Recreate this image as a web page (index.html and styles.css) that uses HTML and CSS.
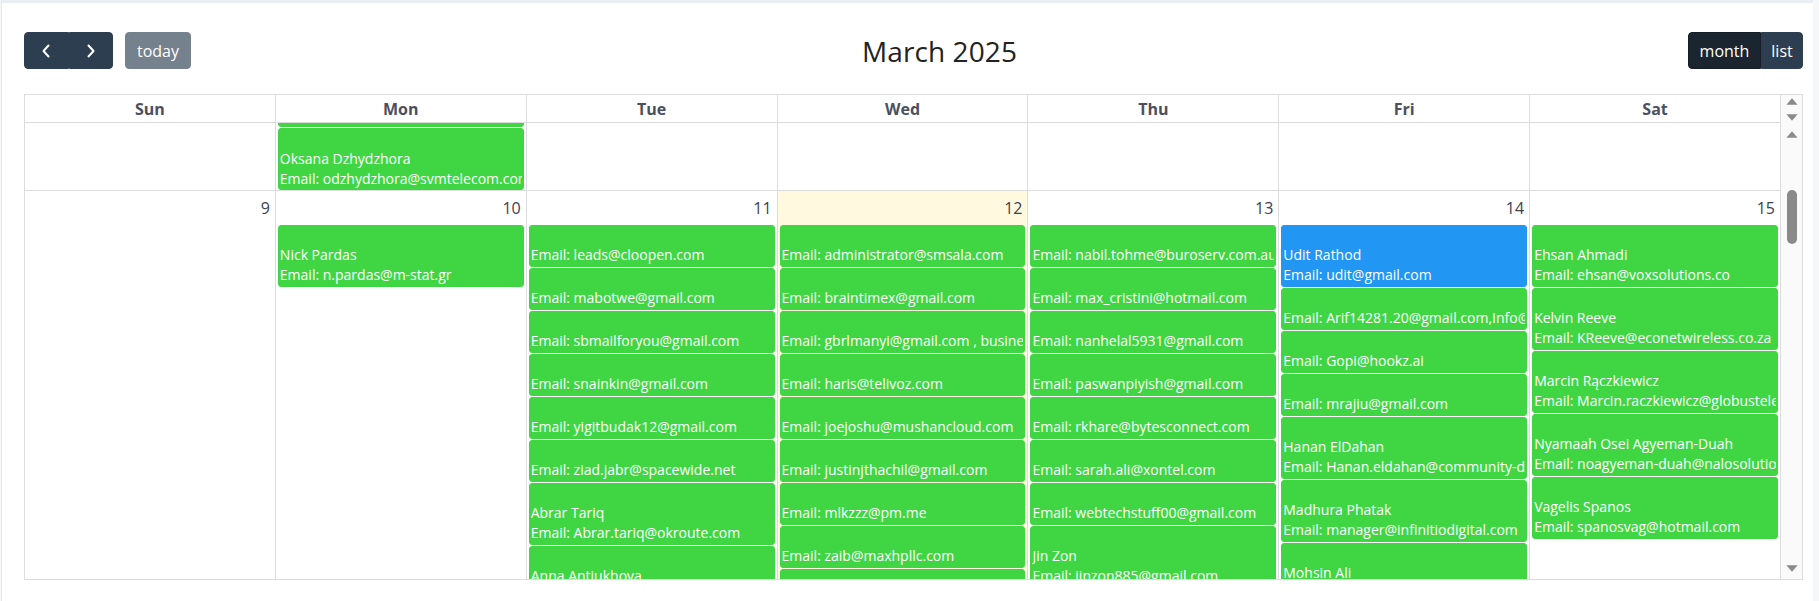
FILE: index.html
```html
<!DOCTYPE html>
<html lang="en">
<head>
<meta charset="utf-8">
<title>Calendar – March 2025</title>
<link rel="stylesheet" href="styles.css">
</head>
<body>
<div class="card">
  <div class="toolbar">
    <div class="chunk">
      <div class="btn-group">
        <button class="btn btn-icon" type="button" aria-label="prev"><svg width="10" height="14" viewBox="0 0 10 14"><polyline points="7.5,1.5 2.5,7 7.5,12.5" fill="none" stroke="#fff" stroke-width="2" stroke-linecap="round" stroke-linejoin="round"/></svg></button>
        <button class="btn btn-icon" type="button" aria-label="next"><svg width="10" height="14" viewBox="0 0 10 14"><polyline points="2.5,1.5 7.5,7 2.5,12.5" fill="none" stroke="#fff" stroke-width="2" stroke-linecap="round" stroke-linejoin="round"/></svg></button>
      </div>
      <button class="btn btn-today" type="button" disabled>today</button>
    </div>
    <h2 class="title">March 2025</h2>
    <div class="chunk">
      <div class="btn-group">
        <button class="btn btn-active" type="button">month</button>
        <button class="btn" type="button">list</button>
      </div>
    </div>
  </div>

  <div class="grid">
    <div class="head-row">
      <div class="cols">
        <div class="hcell">Sun</div>
        <div class="hcell">Mon</div>
        <div class="hcell">Tue</div>
        <div class="hcell">Wed</div>
        <div class="hcell">Thu</div>
        <div class="hcell">Fri</div>
        <div class="hcell">Sat</div>
      </div>
      <div class="sb sb-head">
        <svg class="arrow" width="12" height="7" viewBox="0 0 12 7"><polygon points="6,0.3 11.6,6.7 0.4,6.7" fill="#8a8a8a"/></svg>
        <svg class="arrow arrow-down" width="12" height="7" viewBox="0 0 12 7"><polygon points="0.4,0.3 11.6,0.3 6,6.7" fill="#8a8a8a"/></svg>
      </div>
    </div>

    <div class="body-row">
      <div class="viewport">
        <div class="cols week week-partial">
          <div class="day"></div>
          <div class="day">
            <div class="ev ev-cut"><div class="ln">Ivan Petrenko</div><div class="ln">Email: ivan.petrenko@ukrtelecom.ua</div></div>
            <div class="ev"><div class="ln">Oksana Dzhydzhora</div><div class="ln">Email: odzhydzhora@svmtelecom.com</div></div>
          </div>
          <div class="day"></div>
          <div class="day"></div>
          <div class="day"></div>
          <div class="day"></div>
          <div class="day"></div>
        </div>

        <div class="cols week">
          <div class="day">
            <div class="day-top"><span class="num">9</span></div>
          </div>
          <div class="day">
            <div class="day-top"><span class="num">10</span></div>
            <div class="ev"><div class="ln">Nick Pardas</div><div class="ln">Email: n.pardas@m-stat.gr</div></div>
          </div>
          <div class="day">
            <div class="day-top"><span class="num">11</span></div>
            <div class="ev"><div class="ln">Email: leads@cloopen.com</div></div>
            <div class="ev"><div class="ln">Email: mabotwe@gmail.com</div></div>
            <div class="ev"><div class="ln">Email: sbmailforyou@gmail.com</div></div>
            <div class="ev"><div class="ln">Email: snainkin@gmail.com</div></div>
            <div class="ev"><div class="ln">Email: yigitbudak12@gmail.com</div></div>
            <div class="ev"><div class="ln">Email: ziad.jabr@spacewide.net</div></div>
            <div class="ev"><div class="ln">Abrar Tariq</div><div class="ln">Email: Abrar.tariq@okroute.com</div></div>
            <div class="ev"><div class="ln">Anna Antiukhova</div><div class="ln">Email: anna.antiukhova@gmail.com</div></div>
          </div>
          <div class="day today">
            <div class="day-top"><span class="num">12</span></div>
            <div class="ev"><div class="ln">Email: administrator@smsala.com</div></div>
            <div class="ev"><div class="ln">Email: braintimex@gmail.com</div></div>
            <div class="ev"><div class="ln">Email: gbrlmanyi@gmail.com , business@gbrlmanyi.com</div></div>
            <div class="ev"><div class="ln">Email: haris@telivoz.com</div></div>
            <div class="ev"><div class="ln">Email: joejoshu@mushancloud.com</div></div>
            <div class="ev"><div class="ln">Email: justinjthachil@gmail.com</div></div>
            <div class="ev"><div class="ln">Email: mlkzzz@pm.me</div></div>
            <div class="ev"><div class="ln">Email: zaib@maxhpllc.com</div></div>
            <div class="ev"><div class="ln">Email: info@telcoroute.net</div></div>
          </div>
          <div class="day">
            <div class="day-top"><span class="num">13</span></div>
            <div class="ev"><div class="ln">Email: nabil.tohme@buroserv.com.au</div></div>
            <div class="ev"><div class="ln">Email: max_cristini@hotmail.com</div></div>
            <div class="ev"><div class="ln">Email: nanhelal5931@gmail.com</div></div>
            <div class="ev"><div class="ln">Email: paswanpiyish@gmail.com</div></div>
            <div class="ev"><div class="ln">Email: rkhare@bytesconnect.com</div></div>
            <div class="ev"><div class="ln">Email: sarah.ali@xontel.com</div></div>
            <div class="ev"><div class="ln">Email: webtechstuff00@gmail.com</div></div>
            <div class="ev"><div class="ln">Jin Zon</div><div class="ln">Email: jinzon885@gmail.com</div></div>
          </div>
          <div class="day">
            <div class="day-top"><span class="num">14</span></div>
            <div class="ev ev-blue"><div class="ln">Udit Rathod</div><div class="ln">Email: udit@gmail.com</div></div>
            <div class="ev"><div class="ln">Email: Arif14281.20@gmail.com,Info@vtelecom.com</div></div>
            <div class="ev"><div class="ln">Email: Gopi@hookz.ai</div></div>
            <div class="ev"><div class="ln">Email: mrajiu@gmail.com</div></div>
            <div class="ev"><div class="ln">Hanan ElDahan</div><div class="ln">Email: Hanan.eldahan@community-dev.com</div></div>
            <div class="ev"><div class="ln">Madhura Phatak</div><div class="ln">Email: manager@infinitiodigital.com</div></div>
            <div class="ev"><div class="ln">Mohsin Ali</div><div class="ln">Email: mohsin.ali@gmail.com</div></div>
          </div>
          <div class="day">
            <div class="day-top"><span class="num">15</span></div>
            <div class="ev"><div class="ln">Ehsan Ahmadi</div><div class="ln">Email: ehsan@voxsolutions.co</div></div>
            <div class="ev"><div class="ln">Kelvin Reeve</div><div class="ln">Email: KReeve@econetwireless.co.za</div></div>
            <div class="ev"><div class="ln">Marcin Rączkiewicz</div><div class="ln">Email: Marcin.raczkiewicz@globustelecom.com</div></div>
            <div class="ev"><div class="ln">Nyamaah Osei Agyeman-Duah</div><div class="ln">Email: noagyeman-duah@nalosolutions.com</div></div>
            <div class="ev"><div class="ln">Vagelis Spanos</div><div class="ln">Email: spanosvag@hotmail.com</div></div>
          </div>
        </div>
      </div>
      <div class="sb sb-body">
        <svg class="arrow" width="12" height="7" viewBox="0 0 12 7"><polygon points="6,0.3 11.6,6.7 0.4,6.7" fill="#8a8a8a"/></svg>
        <div class="track"><div class="thumb"></div></div>
        <svg class="arrow" width="12" height="7" viewBox="0 0 12 7"><polygon points="0.4,0.3 11.6,0.3 6,6.7" fill="#8a8a8a"/></svg>
      </div>
    </div>
  </div>
</div>
</body>
</html>
```

FILE: styles.css
```css
* { box-sizing: border-box; }

html, body {
  margin: 0;
  padding: 0;
  height: 100%;
}

body {
  background: #f6f7f8;
  font-family: "Open Sans", "Liberation Sans", sans-serif;
  color: #212529;
  overflow: hidden;
}

.card {
  height: 601px;
  margin: 0 6px 0 1px;
  background: #fff;
  border-top: 3px solid #e9eef5;
  border-left: 1px solid #e8e8e8;
  padding: 29px 10px 0 22px;
}

/* toolbar */
.toolbar {
  display: flex;
  align-items: center;
  justify-content: space-between;
  height: 37px;
  margin-bottom: 25px;
}

.chunk {
  display: flex;
  align-items: center;
  gap: 12px;
}

.btn-group {
  display: flex;
}

.btn {
  height: 37px;
  padding: 0 10.4px;
  border: 1px solid #2c3e50;
  background: #2c3e50;
  color: #fff;
  font-family: "Open Sans", "Liberation Sans", sans-serif;
  font-size: 16px;
  line-height: 1;
  border-radius: 4px;
  display: flex;
  align-items: center;
  justify-content: center;
}

.btn-group .btn {
  border-radius: 0;
}
.btn-group .btn:first-child {
  border-radius: 4px 0 0 4px;
}
.btn-group .btn:last-child {
  border-radius: 0 4px 4px 0;
}

.btn-icon {
  width: 44.5px;
  padding: 0;
}

.btn-today {
  width: 66px;
  padding: 0;
  opacity: 0.65;
}

.btn-active {
  background: #1a252f;
  border-color: #151e27;
  width: 73px;
  padding: 0;
}

.btn-group .btn:last-child:not(.btn-icon) {
  width: 42px;
  padding: 0;
}

.title {
  margin: 0;
  font-size: 28px;
  font-weight: 500;
  color: #222;
  line-height: 1;
  letter-spacing: 0.1px;
}

/* grid */
.grid {
  border: 1px solid #dcdcdc;
  width: 1779px;
  display: flex;
  flex-direction: column;
}

.head-row,
.body-row {
  display: flex;
}

.cols {
  flex: 1;
  display: grid;
  grid-template-columns: repeat(7, 1fr);
}

.hcell {
  height: 28px;
  border-right: 1px solid #dcdcdc;
  border-bottom: 1px solid #dcdcdc;
  display: flex;
  align-items: center;
  justify-content: center;
  font-size: 16px;
  font-weight: 700;
  color: #4c4f5e;
}

.sb {
  width: 21px;
  flex: none;
  background: #fafafa;
  display: flex;
  flex-direction: column;
  align-items: center;
}

.sb-head {
  padding-top: 3px;
}

.sb-head .arrow-down {
  margin-top: 9px;
}

.arrow {
  display: block;
  flex: none;
}

.sb-body {
  padding: 8px 0 7px;
}

.track {
  flex: 1;
  display: flex;
  justify-content: center;
}

.thumb {
  width: 10px;
  height: 54px;
  margin-top: 52px;
  border-radius: 5px;
  background: #8a8a8a;
}

.viewport {
  flex: 1;
  height: 456px;
  overflow: hidden;
}

.week {
  border-bottom: 1px solid #dcdcdc;
}

.day {
  border-right: 1px solid #dcdcdc;
  min-width: 0;
  display: flex;
  flex-direction: column;
}

.week-partial .day {
  height: 68px;
  border-bottom: 1px solid #dcdcdc;
  justify-content: flex-end;
  overflow: hidden;
}
.week-partial {
  border-bottom: 0;
}

.today {
  background: rgba(255, 220, 40, 0.15);
}

.day-top {
  height: 33px;
  display: flex;
  justify-content: flex-end;
  align-items: center;
  padding: 0 5px 0 0;
}

.num {
  font-size: 16px;
  color: #3d4152;
  line-height: 24px;
}

.ev {
  flex: none;
  margin: 1px 2px 0;
  padding: 19px 1px 1px;
  border: 1px solid #40d643;
  border-radius: 3px;
  background: #40d643;
  color: #fff;
  font-size: 14px;
  line-height: 20px;
  overflow: hidden;
}

.week-partial .ev {
  margin: 1px 2px 0;
  padding: 20px 1px 0;
}

.week-partial .ev-cut {
  padding-bottom: 8px;
}

.ev-blue {
  background: #2196f3;
  border-color: #2196f3;
}

.ln {
  white-space: nowrap;
  overflow: hidden;
}
```
